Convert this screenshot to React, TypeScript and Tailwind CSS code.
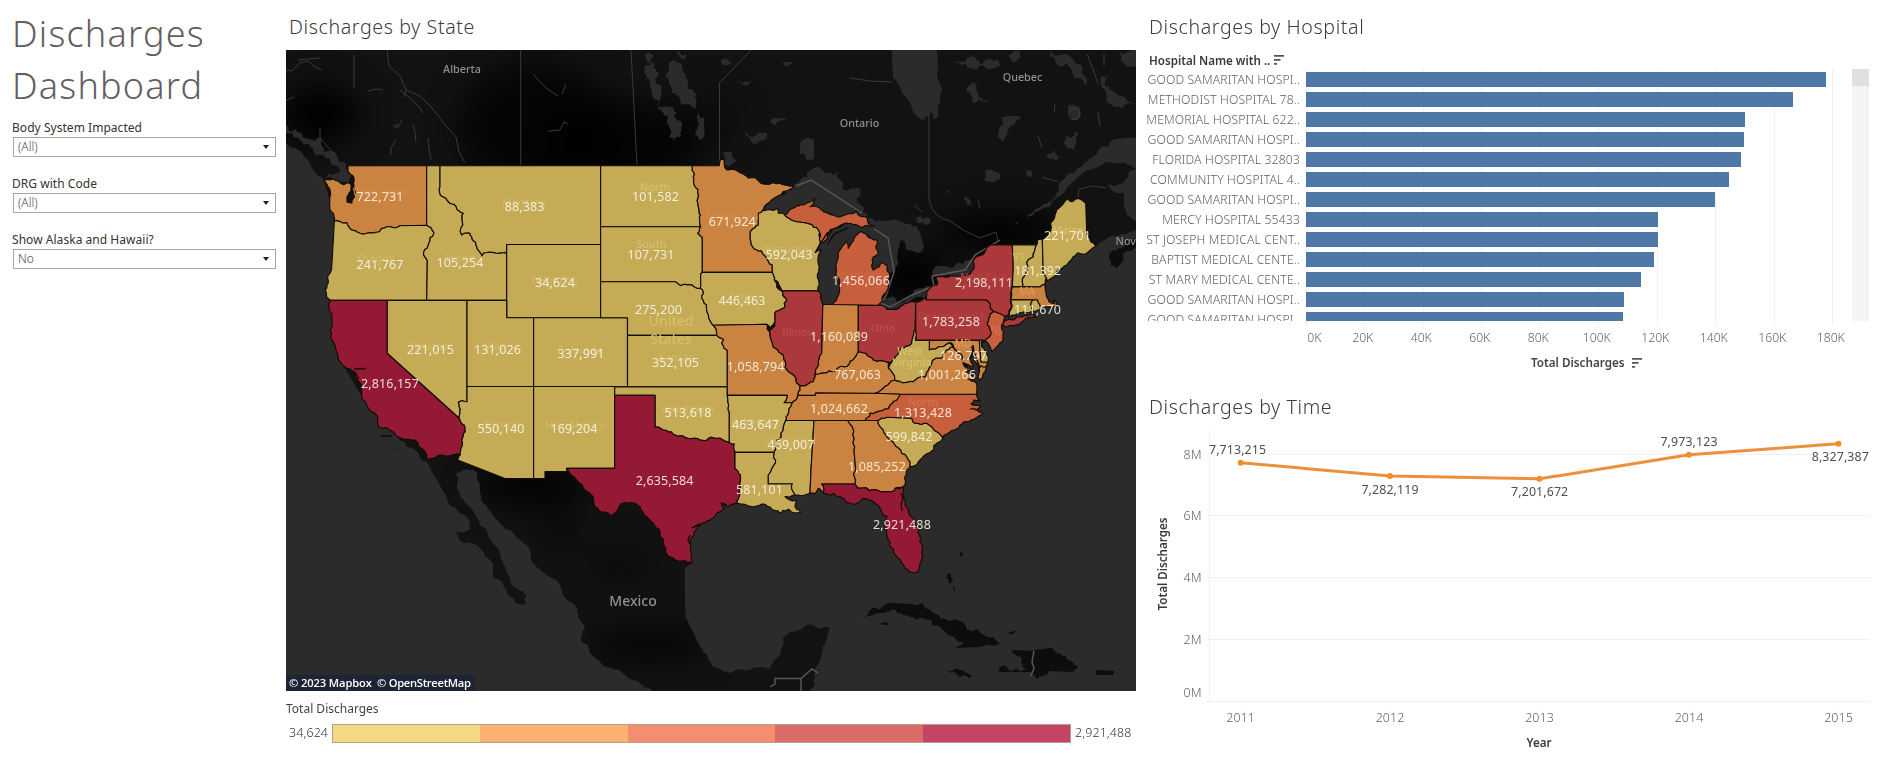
import React from "react";

type Pt = [number, number];

const YELLOW = "#c5ab55";
const ORANGE = "#ca8340";
const CORAL = "#c75f3c";
const RED = "#ab383a";
const CRIMSON = "#931934";
const WATER = "#2b2b2b";

const parse = (s: string): Pt[] =>
  s
    .trim()
    .split(/\s+/)
    .map((p) => p.split(",").map(Number) as Pt);

const hash = (a: number, b: number) => {
  const v = Math.sin(a * 12.9898 + b * 78.233) * 43758.5453;
  return v - Math.floor(v) - 0.5;
};

// Splits natural (river / coast) edges and shifts the midpoints; surveyed lines stay straight.
// The shift depends only on the edge's midpoint, so neighbours share the same border.
const wiggle = (a: Pt, b: Pt, depth: number, amp: number): Pt[] => {
  const dx = b[0] - a[0];
  const dy = b[1] - a[1];
  const len = Math.hypot(dx, dy);
  if (depth === 0 || len < 3.2) return [b];
  const mx = (a[0] + b[0]) / 2;
  const my = (a[1] + b[1]) / 2;
  const k = Math.min(len, 14) * amp;
  const m: Pt = [mx + hash(Math.round(mx * 4), Math.round(my * 4)) * k, my + hash(Math.round(my * 4), Math.round(mx * 4)) * k];
  return [...wiggle(a, m, depth - 1, amp), ...wiggle(m, b, depth - 1, amp)];
};

const outline = (s: string, amp = 0.34) => {
  const pts = parse(s);
  const out: Pt[] = [];
  pts.forEach((p, i) => {
    const q = pts[(i + 1) % pts.length];
    const dx = Math.abs(p[0] - q[0]);
    const dy = Math.abs(p[1] - q[1]);
    const straight = (Math.min(dx, dy) < 1.8 && Math.max(dx, dy) > 17) || Math.min(dx, dy) < 0.4 || Math.hypot(dx, dy) > 38;
    if (straight) out.push(q);
    else out.push(...wiggle(p, q, 3, amp));
  });
  return "M" + out.map((p) => p[0].toFixed(1) + " " + p[1].toFixed(1)).join("L") + "Z";
};

const STATES: { id: string; c: string; d: string }[] = [
  { id: "WA", c: ORANGE, d: "348,165.7 426.7,165.7 426.7,225.3 400,225.7 380,231 360,233.3 351.7,230 346.7,222.7 334.3,221 333.3,213.3 330,196.7 323.7,179.3 340,182.7 350,183.5 351,191 347,197 347,202 352,203 356,192 354,178 348,171" },
  { id: "OR", c: YELLOW, d: "334.3,221 346.7,222.7 351.7,230 360,233.3 380,231 400,225.7 426.7,225.3 434,232.3 428.3,245 424,255.7 427.3,261.7 426.7,300.3 330,300.3 327,285 331.7,266.7 333.3,240" },
  { id: "ID", c: YELLOW, d: "426.7,165.7 440,165.7 440,186.7 448.3,201.7 463.3,213.3 460.7,228.3 461.7,235 470,233.3 476.7,246.7 481.7,255.7 500,252.7 506.7,254 506.7,300.3 426.7,300.3 427.3,261.7 424,255.7 428.3,245 434,232.3 426.7,225.3" },
  { id: "MT", c: YELLOW, d: "440,165.7 600.6,165.7 600.6,244.5 506.7,244.5 506.7,254 500,252.7 481.7,255.7 476.7,246.7 470,233.3 461.7,235 460.7,228.3 463.3,213.3 448.3,201.7 440,186.7" },
  { id: "WY", c: YELLOW, d: "506.7,244.5 600.6,244.5 600.6,317.7 506.7,317.7" },
  { id: "CA", c: CRIMSON, d: "330,300.3 387.3,300.3 387.3,353.3 459.3,418.3 465.3,431.7 461.7,440 460.3,455 426,459.3 423.3,450 408.3,439.3 393.3,431.7 379,427.3 377.7,416.7 361.7,398.3 361.7,386.7 354,371.7 346.7,368.3 336.7,351.7 330,330 331.7,316.7" },
  { id: "NV", c: YELLOW, d: "387.3,300.3 467,300.3 467,401.7 458.3,402.3 460,413.3 459.3,418.3 387.3,353.3" },
  { id: "UT", c: YELLOW, d: "467,300.3 506.7,300.3 506.7,317.7 533.6,317.7 533.6,386.5 467,386.5" },
  { id: "CO", c: YELLOW, d: "533.6,317.7 627.5,317.7 627.5,386.5 533.6,386.5" },
  { id: "AZ", c: YELLOW, d: "467,386.5 533.6,386.5 533.6,478.5 505,478.5 457.7,460 460.3,455 461.7,440 465.3,431.7 459.3,418.3 460,413.3 458.3,402.3 467,401.7" },
  { id: "NM", c: YELLOW, d: "533.6,386.5 614.7,386.5 614.7,468.4 566.7,468.4 566.7,471.5 545,471.5 545,478.5 533.6,478.5" },
  { id: "ND", c: YELLOW, d: "600.6,165.7 692.3,165.7 695,186.7 698.3,206.7 700.7,226.7 600.6,226.7" },
  { id: "SD", c: YELLOW, d: "600.6,226.7 700.7,226.7 697.7,233.3 702.3,237.3 702.3,272.3 700.7,274 700.7,283.3 700,288.3 691.7,284.7 681,285.7 675,281.7 600.6,281.7" },
  { id: "NE", c: YELLOW, d: "600.6,281.7 675,281.7 681,285.7 691.7,284.7 700,288.3 703.3,291.7 706.7,305 710.7,321.7 713.3,325.3 716.7,335.3 627.5,335.3 627.5,317.7 600.6,317.7" },
  { id: "KS", c: YELLOW, d: "627.5,335.3 716.7,335.3 723.3,339.3 721.7,343.3 727.3,350.7 727.3,386.8 627.5,386.8" },
  { id: "OK", c: YELLOW, d: "614.7,386.8 727.3,386.8 727.3,395.3 729.3,413.3 729.3,442.7 720,438.3 705,440.7 693.3,438.3 675,435 663.3,430 655,427 655,395.2 614.7,395.2" },
  { id: "TX", c: CRIMSON, d: "614.7,395.2 655,395.2 655,427 663.3,430 675,435 693.3,438.3 705,440.7 720,438.3 729.3,442.7 734.3,444 735,468.3 740.7,480 740,493.3 737.3,503.3 728.3,506.7 721,503 725,509.3 710,520 696.7,528.3 690,540 691.7,563.3 685,560.7 666.7,554 660,536.7 646.7,516.7 636.7,504 621.7,503.3 611.7,516 595,506.7 590,493.3 566.7,468.4 614.7,468.4" },
  { id: "MN", c: ORANGE, d: "692.3,165.7 719.3,165.7 720.7,159.3 724,160 726.7,170 743.3,174 756.7,179.3 766.7,184.3 780,183.3 794,186.7 776.7,196.7 761.7,211.7 758.3,213.3 758.3,225 751.7,230 752.7,246.7 766.7,258.3 772.3,265 772.3,272.3 702.3,272.3 702.3,237.3 697.7,233.3 700.7,226.7 698.3,206.7 695,186.7" },
  { id: "IA", c: YELLOW, d: "702.3,272.3 772.3,272.3 774.3,280 781.7,290.7 786.7,300 784,308.3 775,312.7 775,321.7 770,328.3 766.7,324.3 713.3,325.3 710.7,321.7 706.7,305 703.3,291.7 700,288.3 700.7,283.3 700.7,274" },
  { id: "WI", c: YELLOW, d: "758.3,213.3 766.7,210 776.7,208.3 778.3,213.3 785,215 793.3,220.7 813.3,226.7 818.3,230 820,240 816,252 821.7,250 818.3,263.3 817.3,276.7 818.3,290.8 781.7,290.8 774.3,280 772.3,272.3 772.3,265 766.7,258.3 752.7,246.7 751.7,230 758.3,225" },
  { id: "IL", c: RED, d: "781.7,290.8 818.3,290.8 821.3,300 822.7,306.7 822,343.3 821.7,353.3 816.7,368.3 815,375 813.3,381.7 806.7,385 800,386 796.7,383.3 793.3,375 785,367.3 783.3,355 771.7,341.7 769.3,331.7 775,321.7 775,312.7 784,308.3 786.7,300" },
  { id: "MO", c: ORANGE, d: "713.3,325.3 766.7,324.3 769.3,331.7 771.7,341.7 783.3,355 785,367.3 793.3,375 796.7,383.3 800,386 798,395.3 792.3,402.7 784,402.7 787.3,395.3 727.3,395.3 727.3,350.7 721.7,343.3 723.3,339.3 716.7,335.3" },
  { id: "AR", c: YELLOW, d: "727.3,395.3 787.3,395.3 784,402.7 792.3,402.7 788.3,413.3 786,420.5 783.3,430 776.7,440 774,452.3 735,452.3 734.3,444 729.3,442.7 729.3,413.3" },
  { id: "LA", c: YELLOW, d: "735,452.3 774,452.3 775.3,463.3 768.3,475 768.3,483.7 792.3,483.7 791.7,488.3 795,495 785,496.5 790,500 796.7,501.7 795,506.7 800.7,512.7 796,512.7 788.3,509.3 780,513.3 771.7,509.3 763.3,504 756.7,506 741.7,504 737.3,503.3 740,493.3 740.7,480 735,468.3" },
  { id: "MS", c: YELLOW, d: "786,420.5 814,420.5 811,470 810,493.3 798.3,495 795,495 791.7,488.3 792.3,483.7 768.3,483.7 768.3,475 775.3,463.3 774,452.3 776.7,440 783.3,430" },
  { id: "AL", c: ORANGE, d: "814,420.5 847.7,420.5 854,450 855.7,470 855,484 821.7,484 823.3,493.3 818.3,488.3 815,494 810,493.3 811,470" },
  { id: "GA", c: ORANGE, d: "847.7,420.5 878.3,420.5 890,440 906.7,456.7 910,466.7 905,476.7 903.3,486.7 895,488.3 894.3,490.7 858.3,488.3 855,484 855.7,470 854,450" },
  { id: "FL", c: CRIMSON, d: "821.7,484 855,484 858.3,488.3 894.3,490.7 895,488.3 902.7,487.3 904,498.3 913.3,518.3 920,536.7 922.3,550 918.3,571.7 909.3,572.3 901.7,563.3 890,546.7 886.7,530 887.3,516.7 873.3,501.7 863.3,498.3 853.3,504.3 840,496.7 823.3,493.3" },
  { id: "SC", c: YELLOW, d: "878.3,420.5 886.7,417.3 911.7,418.3 913.3,422.3 926.7,423.3 942.7,437.3 933.3,450 920,460 910,466.7 906.7,456.7 890,440" },
  { id: "NC", c: CORAL, d: "900,394 976.7,394.3 980,401 974,400 971,404 981,406 976,410 970,409 983,413 971,420 960,425 950,432 942.7,437.3 926.7,423.3 913.3,422.3 911.7,418.3 886.7,417.3 878.3,420.5 865,420.5 870,413 883.3,410 896.7,400" },
  { id: "TN", c: ORANGE, d: "798,395.3 815,395.3 815.7,392.7 875,393.3 900,394 896.7,400 883.3,410 870,413 865,420.5 786,420.5 788.3,413.3 792.3,402.7" },
  { id: "KY", c: ORANGE, d: "800,386 806.7,385 813.3,381.7 815,375 833,371.7 840,366.7 848.3,365 858.3,351.7 866.7,354 873.3,360 888.3,362.3 888.3,368 895,380 883.3,388.3 875,393.3 815.7,392.7 815,395.3 798,395.3" },
  { id: "IN", c: ORANGE, d: "822.7,306.7 823.3,304.5 858.3,304.5 858.3,351.7 848.3,365 840,366.7 833,371.7 815,375 816.7,368.3 821.7,353.3 822,343.3" },
  { id: "OH", c: RED, d: "858.3,305.2 881.7,305.2 886.7,309.3 896.7,309.3 915.7,301.7 915,330 911.7,343.3 900,350 891.7,362.3 888.3,362.3 873.3,360 866.7,354 858.3,351.7" },
  { id: "MI", c: CORAL, d: "831.7,304.5 878.3,305.2 883.3,295 888.3,288.3 889.3,273.3 886.7,265 881.7,262.7 873.3,270 871.7,265 878.3,253.3 876.7,240 866.7,235 860,231.7 855,236.7 848.3,248.3 846.7,241.7 838.3,253.3 836,266.7 839.3,283.3 837.3,296.7" },
  { id: "MI-UP", c: CORAL, d: "785,215 800,205 815,198.3 810,206.7 821.7,210 836.7,216.7 856.7,211 860,216 866.7,217.3 868.3,223.3 875,226 860,226.7 848.3,223.3 838,227 830,230 826,240 821,243 818.3,230 813.3,226.7 793.3,220.7" },
  { id: "NY", c: RED, d: "926,300 926.7,293.3 937.3,285 936,276.7 950,276 965,276 974,268.3 973.3,260 991.7,244.8 1012.3,244.8 1013.3,266.7 1012.3,286.7 1010.5,299.6 1008.3,315 1005,316.7 993.3,311.7 990,308.3 985,300" },
  { id: "NY-LI", c: RED, d: "1002,325 1010,319 1022,317 1033,314.5 1036,316 1022,322 1012,325.5" },
  { id: "PA", c: RED, d: "915.7,301.7 926,297.3 926,300 985,300 990,308.3 993.3,311.7 987.3,323.3 991.7,333.3 985,340.3 915.7,340.3" },
  { id: "NJ", c: CORAL, d: "993.3,311.7 1005,316.7 1001.7,325 1003.3,331.7 998.3,345 991.7,351.7 990,346.7 985,340.3 991.7,333.3 987.3,323.3" },
  { id: "VT", c: YELLOW, d: "1012.3,244.8 1036.7,244.8 1033.3,256.7 1026.7,263.3 1022.7,286.6 1012.3,286.6 1013.3,266.7" },
  { id: "NH", c: YELLOW, d: "1036.7,244.8 1037.7,240 1042.3,239.3 1043.3,273.3 1046.7,278.3 1045,284 1040,287 1022.7,286.6 1026.7,263.3 1033.3,256.7" },
  { id: "ME", c: YELLOW, d: "1042.3,239.3 1046.7,236.7 1053.3,220 1066.7,198.3 1071.7,201.7 1080,199.3 1085.7,203.3 1086.7,231.7 1090.7,241.7 1096,246.7 1086.7,253.3 1073.3,256.7 1066.7,265 1056.7,271.7 1047.3,281 1046.7,278.3 1043.3,273.3" },
  { id: "MA", c: ORANGE, d: "1012.3,286.6 1040,287 1045,284 1046,293.3 1049,301.7 1055,304 1054,300 1057,305 1046.7,306.7 1040,309.3 1037.3,300 1010.5,299.6" },
  { id: "CT", c: YELLOW, d: "1010.5,299.6 1032.7,300 1033.3,311.7 1016.7,314 1008.3,316.7" },
  { id: "RI", c: YELLOW, d: "1032.7,300 1037.3,300 1040,309.3 1033.3,311.7" },
  { id: "MD", c: ORANGE, d: "929.3,340.3 979.3,340.3 981,362 988,362 986.7,366.7 979,370 976.7,363.3 973.3,350 971.7,346.7 969,356.7 973.3,366.7 963,363 958.3,353.3 950,342.7 940,346.7 929.3,350" },
  { id: "DE", c: YELLOW, d: "979.3,340.3 982.7,340 981.7,346.7 988.3,356.7 988,362 981,362" },
  { id: "VA", c: ORANGE, d: "875,393.3 883.3,388.3 895,380 903,382.7 913,381.7 925,376.7 930,366.7 938,358 943,357 946.7,350 953,347 958.3,353.3 963,363 972,369 966,371 976,378 968,379 977,386 976.7,394.3 900,394" },
  { id: "VA-E", c: ORANGE, d: "980,366 986,366.5 985,372 979,380 978,377" },
  { id: "WV", c: YELLOW, d: "915,330 915.7,340.3 929.3,340.3 929.3,350 940,346.7 950,342.7 953,347 946.7,350 943,357 938,358 930,366.7 925,376.7 913,381.7 903,382.7 895,380 888.3,368 891.7,362.3 900,350 911.7,343.3" },
];

const LABELS: [number, number, string][] = [
  [380, 201, "722,731"], [524.7, 210.7, "88,383"], [655.5, 201, "101,582"], [380, 268.5, "241,767"],
  [460, 267, "105,254"], [555, 287, "34,624"], [651, 259, "107,731"], [732.3, 226, "671,924"],
  [789, 259, "592,043"], [742, 305, "446,463"], [658.5, 314, "275,200"], [430.5, 354, "221,015"],
  [497.5, 354, "131,026"], [581, 358, "337,991"], [675.5, 367, "352,105"], [390, 388.3, "2,816,157"],
  [501, 433.3, "550,140"], [574, 433.3, "169,204"], [688, 417, "513,618"], [755.5, 429, "463,647"],
  [791, 449, "469,007"], [755.7, 371.3, "1,058,794"], [839, 341.3, "1,160,089"], [861, 285, "1,456,066"],
  [857.5, 379, "767,063"], [839, 413, "1,024,662"], [664.7, 485, "2,635,584"], [759.5, 494, "581,101"],
  [877, 471, "1,085,252"], [902, 529, "2,921,488"], [909, 441, "599,842"], [923, 417, "1,313,428"],
  [947, 379, "1,001,266"], [963.5, 360.3, "126,797"], [951, 326.3, "1,783,258"], [984, 287.3, "2,198,111"],
  [1037.8, 275.3, "181,392"], [1037.5, 314.3, "111,670"], [1067.5, 240.3, "221,701"],
];

const PLACES: [number, number, string, string, number][] = [
  [462, 72.5, "Alberta", "#909090", 10.8], [859.5, 126.5, "Ontario", "#909090", 10.8], [1022.5, 81, "Quebec", "#909090", 10.8],
  [633, 606, "Mexico", "#8f8f8f", 14], [671, 326, "United", "#d8bd66", 14], [671, 344, "States", "#d8bd66", 14],
  [655, 190.5, "North", "#d6c06e", 10.8], [651.5, 248, "South", "#d6c06e", 10.8], [383, 196, "Washington", "#d08c48", 10.5],
  [524.7, 206, "Montana", "#d0b866", 10.5], [376, 262, "Oregon", "#d0b866", 10.5], [460, 262, "Idaho", "#d0b866", 10.5],
  [554, 283, "Wyoming", "#d0b866", 10.5], [430, 350, "Nevada", "#d0b866", 10.5], [495, 350, "Utah", "#d0b866", 10.5],
  [580, 354, "Colorado", "#d0b866", 10.5], [676, 361, "Kansas", "#d0b866", 10.5], [501, 428, "Arizona", "#d0b866", 10.5],
  [575, 429, "New Mexico", "#d0b866", 10.5], [688, 413, "Oklahoma", "#d0b866", 10.5], [732, 220, "Minnesota", "#d08c48", 10.5],
  [787, 253, "Wisconsin", "#d0b866", 10.5], [742, 300, "Iowa", "#d0b866", 10.5], [756, 366, "Missouri", "#d08c48", 10.5],
  [799, 335.5, "Illinois", "#bb4c4e", 10.8], [842, 337, "Indiana", "#d08c48", 10.5], [883, 332, "Ohio", "#bb4c4e", 10.8],
  [859, 279, "Michigan", "#cc6845", 10.5], [855, 373, "Kentucky", "#d08c48", 10.5], [839, 409, "Tennessee", "#d08c48", 10.5],
  [923, 406, "North", "#d8714f", 10.8], [910, 354.5, "West", "#d6c06e", 10.8], [912, 366, "Virginia", "#d6c06e", 10.8],
  [951, 320, "Pennsylvania", "#b44244", 10.5], [984, 281, "New York", "#b44244", 10.5], [1019, 261, "VT", "#d6c06e", 10.5],
  [1027, 295, "MA", "#dd9a5c", 10], [996, 334, "NJ", "#d8714f", 10], [963, 347, "MD", "#dd9a5c", 10],
  [755, 425, "Arkansas", "#d0b866", 10.5], [790, 444, "Mississippi", "#cdb35f", 10], [1068, 234, "Maine", "#d6c06e", 10.5],
];

const LAND =
  "286,50 891.7,50 893,78 901,90 910,103 917,116 923,120 930,112 934,119 938,117 938,106 942,90 938,70 937,50 1136,50 1136,138 1113,140 1100,148 1093,157 1078,168 1063,180 1056,194 1047,203 1030,214 1015,224 1015,225 1032,216 1050,207 1060,196 1070,185 1087,170 1110,162 1125,163 1136,168 1127,178 1120,184 1107,185 1112,190 1124,193 1124,205 1130,217 1136,222 1136,230 1120,235 1107,238 1097,246 1080,246 1050,270 1040,300 1005,312 996,340 980,344 968,366 970,400 930,438 905,460 898,488 880,495 820,487 740,495 700,520 688,540 692,563 685,568 685,607 692,630 700,647 713,667 730,673 750,670 770,668 778,657 783,640 790,632 813,625 830,628 828,637 820,660 815,677 810,691 653,691 633,680 607,667 590,653 582,642 585,627 573,603 550,577 532,562 530,552 515,535 497,520 487,507 480,490 477,473 463,470 455,473 457,485 460,497 472,510 483,527 497,547 503,563 510,583 516,588 527,595 525,605 513,598 493,577 493,563 480,548 463,543 455,533 470,530 467,517 447,500 437,480 427,462 400,440 364,400 340,360 334,310 336,220 323,178 305,158 286,143";

const ISLANDS = [
  "863,618 870,610 890,603 913,604 933,613 953,620 967,630 982,634 1000,643 980,647 955,648 963,642 943,630 930,620 910,617 897,613 896,610 880,613",
  "1012,650 1033,651 1057,653 1068,660 1078,667 1073,672 1050,671 1038,679 1030,672 1015,672 998,672 999,667 1027,669 1021,657",
  "946,671 960,670 972,676 960,678", "1095,670 1114,671 1113,675 1096,675", "946,578 949,573 953,580 949,584", "951,586 955,588 955,592",
  "880,624 886,621 888,625", "1008,633 1016,631 1013,634", "941,550 948,550", "960,552 962,553 961,557",
  "1110,260 1113,250 1121,248 1136,238 1136,247 1117,269 1111,266",
];

const LAKES = [
  // Winnipeg, Manitoba
  "669,62 675,60 682,64 688,80 694,92 696,104 704,118 704,128 699,140 695,134 697,118 688,104 680,102 672,93 669,80 666,74",
  "644,72 652,62 658,76 656,84 660,98 662,108 658,110 652,92 650,80", "664,106 676,112 677,120 681,136 674,141 669,126 668,116 662,112",
  "648,52 654,56 650,64", "676,52 686,54 684,60",
  // Great Lakes
  "761,211 777,196 794,187 802,178 808,172 816,167 838,172 843,186 858,188 857,198 862,206 868,216 858,222 838,222 820,214 800,212 780,218",
  "817,254 820,238 832,230 850,224 868,222 878,226 868,236 850,248 840,262 842,288 836,304 824,306 816,290",
  "866,222 880,221 905,224 920,232 924,246 918,254 908,250 902,240 898,252 894,272 888,282 876,276 868,268 872,252",
  "879,306 885,298 897,304 912,296 928,286 936,284 938,288 924,298 905,307 890,312",
  "932,272 945,266 962,264 974,258 976,268 966,278 938,280",
  // smaller lakes
  "800,144 806,138 814,140 814,158 808,160 800,154", "1001,126 1010,116 1020,116 1009,128 1002,142", "985,174 992,170 1000,174 1000,180 986,181",
  "1026,170 1032,172 1032,178 1027,177", "744,132 752,138 766,132 764,140 752,142", "721,60 734,62 728,65 721,63", "782,62 794,62 788,66",
  "738,80 754,78 750,83 740,82", "770,122 786,119 776,125", "954,64 972,54 980,64 998,60 1000,66 972,70", "966,88 976,84 978,96 990,100 972,102",
  "720,152 732,152 736,162 728,166", "1068,110 1074,104 1080,112 1078,120 1072,120", "1050,52 1064,54 1082,70 1086,86 1078,78 1066,64",
  "1100,78 1108,76 1110,90 1126,98 1135,105 1122,108 1106,100", "1118,52 1136,50 1136,66 1124,64", "1046,156 1054,150 1060,158 1050,159",
  "1064,134 1070,138 1076,132 1074,150 1068,148", "916,220 930,218 931,222 918,223", "1009,54 1020,52 1012,62", "965,196 972,206 966,204",
  "286,125 300,133 312,140 320,138 325,152 345,163 352,170 348,182 335,182 323,178 340,172 325,158 310,145 286,133",
];

const THIN_LINES = [
  "M286 70L292 71L300 63L308 61L315 67L322 70", "M298 60L320 58", "M354 55L354 88", "M368 91L376 89L383 90",
  "M387 50L389 66L400 76L406 90L420 96L432 108L446 126L456 137L459 152L465 163",
  "M400 90L410 98L420 108L423 113", "M406 90L404 97", "M393 126L400 124L402 119M394 128L400 126", "M413 124L415 133L416 142",
  "M396 140L391 148L391 155", "M428 138L429 150L431 160", "M533 74L546 88L558 96M562 94L566 84", "M548 131L560 130L564 122L568 124",
  "M286 100L294 97", "M850 78L870 81L892 82", "M1042 177L1058 182", "M1078 197L1079 189L1092 186L1106 188",
  "M320 128L320 138L334 154", "M1098 112L1100 126M1055 104L1054 113M1038 136L1042 148M914 205L922 212M946 190L950 193M980 208L978 200",
  "M1087 54L1094 72L1098 84M1104 54L1104 66",
];

const NUM_FONT = "font-['Noto_Sans','Open_Sans',sans-serif]";

function DischargeMap() {
  return (
    <svg className="block h-[641px] w-[850px]" viewBox="286 50 850 641" role="img" aria-label="Discharges by State">
      <defs>
        <filter id="soft" x="-50%" y="-50%" width="200%" height="200%">
          <feGaussianBlur stdDeviation="16" />
        </filter>
        <clipPath id="landClip">
          <path d={outline(LAND)} />
        </clipPath>
      </defs>
      <rect x="286" y="50" width="850" height="641" fill={WATER} />
      <path d={outline(LAND)} fill="#121212" />
      <g clipPath="url(#landClip)">
        <g filter="url(#soft)" fill="#040404">
          <ellipse cx="535" cy="128" rx="78" ry="66" opacity=".7" />
          <ellipse cx="620" cy="145" rx="80" ry="45" opacity=".75" />
          <ellipse cx="320" cy="115" rx="40" ry="28" />
          <ellipse cx="910" cy="275" rx="35" ry="25" />
          <ellipse cx="1000" cy="232" rx="60" ry="18" />
          <ellipse cx="530" cy="485" rx="55" ry="22" opacity=".85" />
          <ellipse cx="620" cy="565" rx="30" ry="20" opacity=".35" />
          <ellipse cx="650" cy="645" rx="60" ry="20" opacity=".6" />
          <ellipse cx="560" cy="525" rx="20" ry="30" opacity=".35" />
          <ellipse cx="700" cy="120" rx="40" ry="30" opacity=".3" />
        </g>
      </g>
      {ISLANDS.map((d) => (
        <path key={d} d={outline(d, 0.5)} fill="#0d0d0d" />
      ))}
      {LAKES.map((d) => (
        <path key={d} d={outline(d, 0.6)} fill={WATER} />
      ))}
      <g fill="none" stroke="#3a3a3a" strokeWidth="1">
        {THIN_LINES.map((d) => (
          <path key={d} d={d} />
        ))}
        <circle cx="1074" cy="114" r="5.5" />
        <path d="M520.7 50V165M631 50L637 165M751 50L719.5 83V165M929 113V200Q933 218 950 221Q964 232 980 238L996 232L998 242" />
      </g>
      <g fill="none" stroke="#5a5a5a" strokeWidth="1.4">
        <path d="M796 186L811 180L862 213M874 229L888 238L894 272L886 296L880 303L890 307L912 295L934 286L932 276L965 270L975 255L1000 240" />
        <path d="M770 687L775 684V678.5H801V691M801 678.5L812 669L818 673M1034 651L1032 662L1034 668L1031 676" />
      </g>
      <g stroke="#120c05" strokeWidth="1.15" strokeLinejoin="round">
        {STATES.map((s) => (
          <path key={s.id} d={outline(s.d)} fill={s.c} />
        ))}
      </g>
      <g stroke="#120c05" strokeWidth="1.4" fill="none">
        <path d="M354 369L366 368.5M355 372L359 379M901 493L903 499L901 504L902 511M973 345L974 352L977 360L980 368M721 503L727 505M815 253L820 244L828 232M848 228L834 234L828 244M690 535L688 540L690 544M692 528L700 524" />
        <path d="M381 436H392M406 445L409 447M394 448L395 449" />
      </g>
      <g className={NUM_FONT} textAnchor="middle" fontWeight="500">
        {PLACES.map(([x, y, t, c, s]) => (
          <text key={t + y} x={x} y={y} fill={c} fontSize={s}>
            {t}
          </text>
        ))}
        <text x="1115.5" y="245.3" fill="#909090" fontSize="10.8" textAnchor="start">
          Nova
        </text>
      </g>
      <g className={NUM_FONT} textAnchor="middle" fontSize="12.5" letterSpacing="0.12" fill="#faf5ec" fillOpacity=".88" fontWeight="400">
        {LABELS.map(([x, y, t]) => (
          <text key={t} x={x} y={y}>
            {t}
          </text>
        ))}
      </g>
      <rect x="286" y="675" width="189" height="16" fill="#1d2436" />
      <text x="289" y="687.3" fill="#ffffff" fontSize="11.2" fontWeight="600" className="font-['Open_Sans','Noto_Sans',sans-serif]" textLength="83">
        © 2023 Mapbox
      </text>
      <text x="377" y="687.3" fill="#ffffff" fontSize="11.2" fontWeight="600" className="font-['Open_Sans','Noto_Sans',sans-serif]" textLength="94">
        © OpenStreetMap
      </text>
    </svg>
  );
}

function Filter({ label, value }: { label: string; value: string }) {
  return (
    <div className="h-14">
      <div className="h-[19px] pt-px text-[12px] leading-[17px] tracking-[0.04px] text-[#333]">{label}</div>
      <div className="ml-px flex h-5 w-[263px] items-center justify-between border border-[#a5a8a8] pr-1.5 pl-1">
        <span className="text-[12px] leading-4 font-light text-[#4a4a4a]">{value}</span>
        <svg className="h-1 w-1.5" viewBox="0 0 6 4">
          <path d="M0 0H6L3 4Z" fill="#222" />
        </svg>
      </div>
    </div>
  );
}

function SortIcon() {
  return (
    <svg className="h-2.5 w-2.5 shrink-0" viewBox="0 0 10 10" fill="#555">
      <path d="M0 0H10V1.7H0ZM0 4H6.5V5.7H0ZM0 8H3V9.7H0Z" />
    </svg>
  );
}

const HOSPITALS: [string, number][] = [
  ["GOOD SAMARITAN HOSPI..", 520], ["METHODIST HOSPITAL 78..", 487], ["MEMORIAL HOSPITAL 622..", 439], ["GOOD SAMARITAN HOSPI..", 438],
  ["FLORIDA HOSPITAL 32803", 435], ["COMMUNITY HOSPITAL 4..", 423], ["GOOD SAMARITAN HOSPI..", 409], ["MERCY HOSPITAL 55433", 352],
  ["ST JOSEPH MEDICAL CENT..", 352], ["BAPTIST MEDICAL CENTE..", 348], ["ST MARY MEDICAL CENTE..", 335], ["GOOD SAMARITAN HOSPI..", 318],
  ["GOOD SAMARITAN HOSPI..", 317],
];

const TICKS = ["0K", "20K", "40K", "60K", "80K", "100K", "120K", "140K", "160K", "180K"];

function HospitalChart() {
  return (
    <section className="h-[380px]">
      <h2 className="h-[50px] pt-2.5 pl-[9px] text-[19.6px] leading-[33px] font-light tracking-[0.6px] text-[#3c3c3c]">Discharges by Hospital</h2>
      <div className="flex h-[19px] items-center pl-[9px] text-[11.6px] font-semibold text-[#3a3a3a]">
        <span className="w-[125px] whitespace-nowrap pt-0.5">Hospital Name with ..</span>
        <SortIcon />
      </div>
      <div className="flex h-[252px]">
        <div className="h-[252px] w-[166px] overflow-hidden">
          {HOSPITALS.map(([n], i) => (
            <div key={i} className="flex h-5 items-center justify-end pr-1.5 pt-0.5 text-[12.2px] font-light tracking-[0.14px] whitespace-nowrap text-[#606060]">
              {n}
            </div>
          ))}
        </div>
        <div className="h-[256px] w-[546px] bg-[repeating-linear-gradient(to_right,#f0f0f0_0,#f0f0f0_1px,transparent_1px,transparent_58.5px)]">
          <div className="h-[252px] overflow-hidden pt-[3px]">
            {HOSPITALS.map(([, w], i) => (
              <div key={i} className="mb-[5px] h-[15px] bg-[#4e79a7]" style={{ width: w }} />
            ))}
          </div>
        </div>
        <div className="h-[252px] w-[17px] bg-[#f4f4f4]">
          <div className="h-[17px] bg-[#e0e0e0]" />
        </div>
      </div>
      <div className="ml-[135px] flex h-[30px] w-[585px] items-start pt-2 text-[12.2px] leading-[17px] font-light text-[#606060]">
        {TICKS.map((t, i) => (
          <span key={t} className={i === 0 ? "w-[58.5px] pl-5 text-center" : "w-[58.5px] text-center"}>
            {t}
          </span>
        ))}
      </div>
      <div className="ml-[391px] flex items-center gap-1.5 text-[11.7px] leading-[23px] font-semibold text-[#444]">
        <span className="w-[95px] whitespace-nowrap">Total Discharges</span>
        <SortIcon />
      </div>
    </section>
  );
}

const TIME: { x: number; y: number; year: string; label: string; lx: number; ly: number }[] = [
  { x: 1240.7, y: 462.7, year: "2011", label: "7,713,215", lx: 1237.6, ly: 454.3 },
  { x: 1390, y: 476, year: "2012", label: "7,282,119", lx: 1390, ly: 494 },
  { x: 1539.5, y: 478.8, year: "2013", label: "7,201,672", lx: 1539.7, ly: 496 },
  { x: 1689, y: 454.8, year: "2014", label: "7,973,123", lx: 1689, ly: 446 },
  { x: 1838.5, y: 443.7, year: "2015", label: "8,327,387", lx: 1840.3, ly: 461.3 },
];

function TimeChart() {
  return (
    <section className="h-[378px]">
      <h2 className="h-[50px] pt-2.5 pl-[9px] text-[19.6px] leading-[33px] font-light tracking-[0.6px] text-[#3c3c3c]">Discharges by Time</h2>
      <svg className={"block h-[328px] w-[740px] " + NUM_FONT} viewBox="1140 430 740 328">
        <g stroke="#f0f0f0" strokeWidth="1">
          <path d="M1206 454.5H1870M1206 515.5H1870M1206 577.5H1870M1206 639.5H1870" />
          <path d="M1206 701.5H1870M1209.5 430V702" />
          {TIME.map((t) => (
            <path key={t.year} d={`M${Math.round(t.x) + 0.5} 702v4`} />
          ))}
        </g>
        <rect x="1209" y="444" width="58" height="12" fill="#fff" />
        <rect x="1811" y="451" width="59" height="12" fill="#fff" />
        <polyline points={TIME.map((t) => `${t.x},${t.y}`).join(" ")} fill="none" stroke="#ec9139" strokeWidth="3" strokeLinejoin="round" />
        {TIME.map((t) => (
          <circle key={t.year} cx={t.x} cy={t.y} r="3" fill="#f28e2b" />
        ))}
        <g fontSize="12.4" letterSpacing="0.1" textAnchor="middle" fill="#505050">
          {TIME.map((t) => (
            <text key={t.label} x={t.lx} y={t.ly}>
              {t.label}
            </text>
          ))}
        </g>
        <g fontSize="12.4" letterSpacing="0.1" textAnchor="middle" fill="#606060" fontWeight="300">
          {TIME.map((t) => (
            <text key={t.year} x={t.x} y="722">
              {t.year}
            </text>
          ))}
        </g>
        <g fontSize="12.4" textAnchor="end" fill="#606060" fontWeight="300">
          <text x="1201.5" y="458.7">8M</text>
          <text x="1201.5" y="519.8">6M</text>
          <text x="1201.5" y="581.8">4M</text>
          <text x="1201.5" y="643.8">2M</text>
          <text x="1201.5" y="697">0M</text>
        </g>
        <g fontSize="11.6" textAnchor="middle" fill="#3a3a3a" fontWeight="600">
          <text x="1539" y="747">Year</text>
          <text transform="translate(1166.5 564) rotate(-90)">Total Discharges</text>
        </g>
      </svg>
    </section>
  );
}

export default function App() {
  return (
    <main className="flex h-[758px] w-[1880px] overflow-hidden bg-white font-['Noto_Sans','Open_Sans',sans-serif]">
      <aside className="w-[286px] shrink-0 pl-3">
        <h1 className="h-[118px] pt-2 text-[36px] leading-[52px] font-light tracking-[1.2px] text-[#5f5f5f]">
          Discharges
          <br />
          Dashboard
        </h1>
        <Filter label="Body System Impacted" value="(All)" />
        <Filter label="DRG with Code" value="(All)" />
        <Filter label="Show Alaska and Hawaii?" value="No" />
      </aside>
      <section className="w-[854px] shrink-0">
        <h2 className="h-[50px] pt-2.5 pl-[3px] text-[19.6px] leading-[33px] font-light tracking-[0.6px] text-[#3c3c3c]">Discharges by State</h2>
        <DischargeMap />
        <div className="h-[33px] pt-[9px] text-[12px] leading-[17px] text-[#444]">Total Discharges</div>
        <div className="flex h-[19px] items-center text-[12.4px] font-light tracking-[0.15px] text-[#333]">
          <span className="w-[46px] pl-[3px]">34,624</span>
          <div className="grid h-[19px] w-[739px] grid-cols-5 border border-[#b3a28a]">
            <div className="bg-[#f4d985]" />
            <div className="bg-[#fab272]" />
            <div className="bg-[#f38f6e]" />
            <div className="bg-[#db6b69]" />
            <div className="bg-[#c44563]" />
          </div>
          <span className="pl-1">2,921,488</span>
        </div>
      </section>
      <div className="w-[740px] shrink-0">
        <HospitalChart />
        <TimeChart />
      </div>
    </main>
  );
}
